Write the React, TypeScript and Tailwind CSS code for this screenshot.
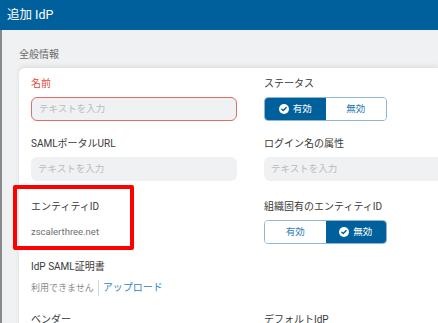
import React from 'react';

const font = { fontFamily: 'Roboto, "Noto Sans CJK JP", sans-serif' };

const CheckDot: React.FC = () => (
  <svg width="10" height="10" viewBox="0 0 12 12" className="shrink-0">
    <circle cx="6" cy="6" r="6" fill="#ffffff" />
    <path d="M3.4 6.2 L5.2 7.9 L8.6 4.3" fill="none" stroke="#00609c" strokeWidth="1.7" strokeLinecap="round" strokeLinejoin="round" />
  </svg>
);

const Toggle: React.FC<{ on: 'left' | 'right' }> = ({ on }) => (
  <div className="flex w-[123px] h-[24px] rounded-[4px] border border-[#8db6d6] overflow-hidden text-[9.5px]">
    <div
      className={`flex-1 flex items-center justify-center gap-[4px] ${on === 'left' ? 'bg-[#00609c] text-white' : 'bg-white text-[#2f7cb8]'}`}
    >
      {on === 'left' && <CheckDot />}
      <span>有効</span>
    </div>
    <div
      className={`flex-1 flex items-center justify-center gap-[4px] ${on === 'right' ? 'bg-[#00609c] text-white' : 'bg-white text-[#2f7cb8]'}`}
    >
      {on === 'right' && <CheckDot />}
      <span>無効</span>
    </div>
  </div>
);

const Input: React.FC<{ error?: boolean; wide?: boolean }> = ({ error, wide }) => (
  <div
    className={`h-[24px] ${wide ? 'w-[240px]' : 'w-[206px]'} rounded-[6px] bg-[#f0f1f3] flex items-center px-[7px] text-[9.5px] text-[#b9bcc0] ${error ? 'border border-[#e06c66]' : ''}`}
  >
    テキストを入力
  </div>
);

const Label: React.FC<{ children: React.ReactNode; red?: boolean }> = ({ children, red }) => (
  <div className={`text-[10px] leading-[14px] ${red ? 'text-[#e5483c]' : 'text-[#3a3a3a]'}`}>{children}</div>
);

export default function App() {
  return (
    <div className="w-[438px] h-[323px] overflow-hidden bg-[#f0f1f3] flex flex-col" style={font}>
      <div className="h-[30px] bg-[#00609c] text-white text-[12.5px] flex items-center pl-[7px] shrink-0">追加 IdP</div>
      <div className="flex-1 border-l-2 border-[#8a8a8a] pl-[17px] pt-[18px]">
        <div className="text-[10px] leading-[14px] text-[#6a6a6a]">全般情報</div>
        <div className="mt-[6px] bg-white rounded-tl-[6px] shadow-[0_-2px_5px_rgba(0,0,0,0.08)] pl-[12px] pt-[9px] h-[300px]">
          {/* row 1 */}
          <div className="flex gap-[27px]">
            <div className="w-[206px]">
              <Label red>名前</Label>
              <div className="mt-[6px]"><Input error /></div>
            </div>
            <div>
              <Label>ステータス</Label>
              <div className="mt-[6px]"><Toggle on="left" /></div>
            </div>
          </div>
          {/* row 2 */}
          <div className="flex gap-[27px] mt-[16px]">
            <div className="w-[206px]">
              <Label>SAMLポータルURL</Label>
              <div className="mt-[6px]"><Input /></div>
            </div>
            <div>
              <Label>ログイン名の属性</Label>
              <div className="mt-[6px]"><Input wide /></div>
            </div>
          </div>
          {/* row 3 */}
          <div className="flex gap-[27px] mt-[19px] h-[43px]">
            <div className="w-[206px] relative">
              <Label>エンティティID</Label>
              <div className="mt-[11px] text-[9.5px] leading-[14px] text-[#6f6f6f]">zscalerthree.net</div>
              <div className="absolute left-[-18px] top-[-15px] w-[121px] h-[65px] border-[4px] border-[#ff0000] rounded-[2px]" />
            </div>
            <div>
              <Label>組織固有のエンティティID</Label>
              <div className="mt-[6px]"><Toggle on="right" /></div>
            </div>
          </div>
          {/* row 4 */}
          <div className="mt-[17px]">
            <Label>IdP SAML証明書</Label>
            <div className="mt-[6px] flex items-center text-[9px] leading-[14px]">
              <span className="text-[#8a8a8a]">利用できません</span>
              <span className="mx-[4px] w-px h-[16px] bg-[#d6d6d6]" />
              <span className="text-[#2f86c6] text-[10px]">アップロード</span>
            </div>
          </div>
          {/* row 5 */}
          <div className="flex gap-[27px] mt-[17px]">
            <div className="w-[206px]"><Label>ベンダー</Label></div>
            <div><Label>デフォルトIdP</Label></div>
          </div>
        </div>
      </div>
    </div>
  );
}
